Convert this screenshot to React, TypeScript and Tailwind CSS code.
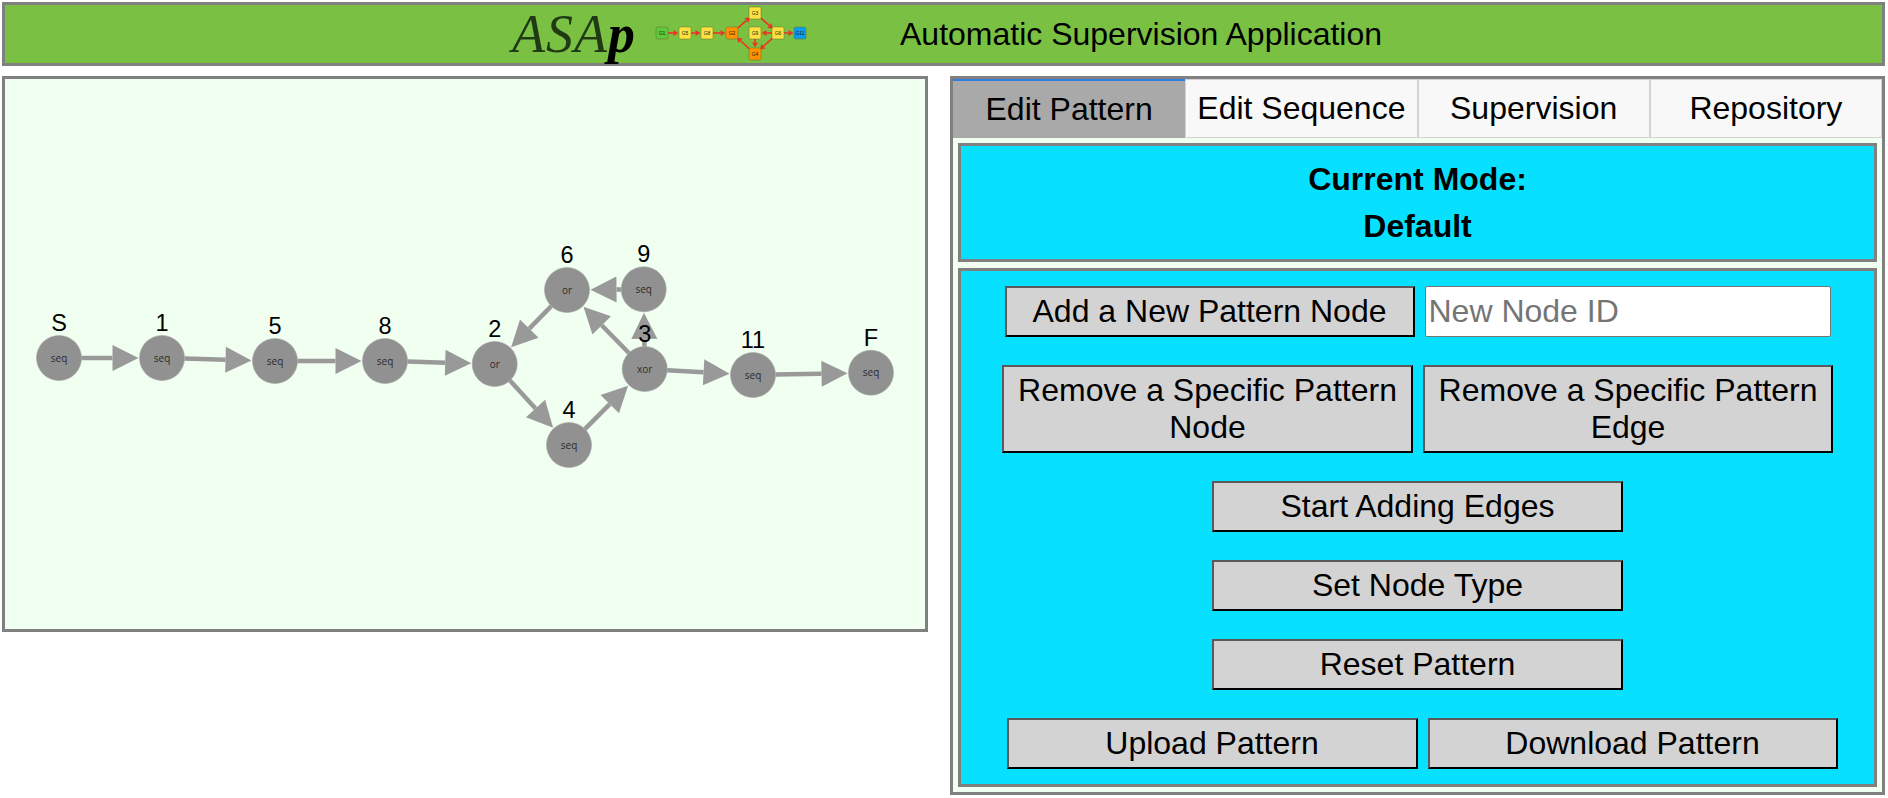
const sans = "font-['Liberation_Sans',Arial,sans-serif]"

type GraphNode = { id: string; kind: string; x: number; y: number }

const nodes: GraphNode[] = [
  { id: 'S', kind: 'seq', x: 59, y: 358 },
  { id: '1', kind: 'seq', x: 162, y: 358 },
  { id: '5', kind: 'seq', x: 275, y: 361 },
  { id: '8', kind: 'seq', x: 385, y: 361 },
  { id: '2', kind: 'or', x: 494.7, y: 364 },
  { id: '6', kind: 'or', x: 567, y: 290 },
  { id: '9', kind: 'seq', x: 643.7, y: 289.3 },
  { id: '3', kind: 'xor', x: 644.7, y: 369 },
  { id: '4', kind: 'seq', x: 569, y: 445 },
  { id: '11', kind: 'seq', x: 753, y: 375 },
  { id: 'F', kind: 'seq', x: 871, y: 372.7 },
]

const edges = [
  ['S', '1'], ['1', '5'], ['5', '8'], ['8', '2'], ['2', '4'], ['4', '3'],
  ['3', '6'], ['3', '9'], ['9', '6'], ['6', '2'], ['3', '11'], ['11', 'F'],
]

function Edge({ from, to }: { from: GraphNode; to: GraphNode }) {
  const dx = to.x - from.x
  const dy = to.y - from.y
  const len = Math.hypot(dx, dy)
  const ux = dx / len
  const uy = dy / len
  const r = 22.5
  const tipX = to.x - ux * (r + 1)
  const tipY = to.y - uy * (r + 1)
  const baseX = tipX - ux * 26
  const baseY = tipY - uy * 26
  const px = -uy * 13
  const py = ux * 13
  return (
    <g>
      <line x1={from.x + ux * r} y1={from.y + uy * r} x2={baseX} y2={baseY} stroke="#999999" strokeWidth={4.5} />
      <polygon points={`${tipX},${tipY} ${baseX + px},${baseY + py} ${baseX - px},${baseY - py}`} fill="#999999" />
    </g>
  )
}

function PatternGraph() {
  const byId = (id: string) => nodes.find((n) => n.id === id)!
  return (
    <svg viewBox="5 79 920 550" className="block h-full w-full">
      {edges.map(([a, b]) => (
        <Edge key={a + b} from={byId(a)} to={byId(b)} />
      ))}
      {nodes.map((n) => (
        <g key={n.id}>
          <circle cx={n.x} cy={n.y} r={22.5} fill="#919191" stroke="#a3a3a3" strokeWidth={0.6} />
          <text x={n.x} y={n.y + 3.5} textAnchor="middle" fontSize={10} fill="#2b2b2b" fontFamily="'Open Sans', sans-serif">
            {n.kind}
          </text>
          <text x={n.x} y={n.y - 27} textAnchor="middle" fontSize={23.5} fill="#000000" fontFamily="'Liberation Sans', sans-serif">
            {n.id}
          </text>
        </g>
      ))}
    </svg>
  )
}

type LogoNode = { id: string; x: number; y: number; fill: string }

const logoNodes: LogoNode[] = [
  { id: 'G1', x: 662, y: 33, fill: '#5ec93a' },
  { id: 'G5', x: 685, y: 33, fill: '#ffe23f' },
  { id: 'G8', x: 707, y: 33, fill: '#ffe23f' },
  { id: 'G2', x: 732, y: 33, fill: '#ff9200' },
  { id: 'G3', x: 755, y: 13, fill: '#ffe23f' },
  { id: 'G9', x: 755, y: 33, fill: '#ffe23f' },
  { id: 'G6', x: 778, y: 33, fill: '#ffe23f' },
  { id: 'G4', x: 755, y: 54, fill: '#ff9200' },
  { id: 'G11', x: 800, y: 33, fill: '#0a9df2' },
]

const logoEdges = [
  ['G1', 'G5'], ['G5', 'G8'], ['G8', 'G2'], ['G2', 'G3'], ['G3', 'G6'], ['G6', 'G9'],
  ['G6', 'G11'], ['G9', 'G4'], ['G6', 'G4'], ['G4', 'G2'],
]

function LogoGraph() {
  const byId = (id: string) => logoNodes.find((n) => n.id === id)!
  return (
    <svg viewBox="654 5 154 58" className="h-[58px] w-[154px] shrink-0">
      {logoEdges.map(([a, b]) => {
        const s = byId(a)
        const t = byId(b)
        const len = Math.hypot(t.x - s.x, t.y - s.y)
        const ux = (t.x - s.x) / len
        const uy = (t.y - s.y) / len
        const tipX = t.x - ux * 6.5
        const tipY = t.y - uy * 6.5
        const bx = tipX - ux * 5
        const by = tipY - uy * 5
        const px = -uy * 3
        const py = ux * 3
        return (
          <g key={a + b}>
            <line x1={s.x + ux * 6} y1={s.y + uy * 6} x2={bx} y2={by} stroke="#ee3322" strokeWidth={1.6} />
            <polygon points={`${tipX},${tipY} ${bx + px},${by + py} ${bx - px},${by - py}`} fill="#ee3322" />
          </g>
        )
      })}
      {logoNodes.map((n) => (
        <g key={n.id}>
          <rect x={n.x - 6} y={n.y - 6} width={12} height={12} rx={1.5} fill={n.fill} stroke="#6b6b2e" strokeWidth={0.5} />
          <text x={n.x} y={n.y + 1.8} textAnchor="middle" fontSize={5} fill="#1a1a1a" fontFamily="'Liberation Sans', sans-serif">
            {n.id}
          </text>
        </g>
      ))}
    </svg>
  )
}

const btn =
  "h-full w-full border-2 border-t-[#5a5a5a] border-l-[#5a5a5a] border-r-black border-b-black bg-[#d3d3d3] text-[32px] leading-[37px] text-black"

export default function App() {
  return (
    <div className={`${sans} h-[798px] w-[1888px] overflow-hidden bg-white text-black`}>
      <header className="ml-[2px] mt-[2px] flex h-[64px] w-[1883px] items-center border-[3px] border-[#808080] bg-[#7ac143]">
        <span className="ml-[507px] w-[142px] shrink-0 whitespace-nowrap font-['Liberation_Serif',serif] text-[54px] italic leading-none tracking-[1px]">
          <span className="text-[#1f3a14]">ASA</span>
          <span className="font-bold">p</span>
        </span>
        <LogoGraph />
        <span className="ml-[92px] whitespace-nowrap text-[32px]">Automatic Supervision Application</span>
      </header>

      <div className="mt-[10px] flex items-start">
        <div className="ml-[2px] h-[556px] w-[926px] border-[3px] border-[#808080] bg-[#f0fff0]">
          <PatternGraph />
        </div>

        <div className="ml-[22px] flex h-[719px] w-[935px] flex-col border-[3px] border-[#808080] bg-[#f0fff0]">
          <nav className="grid h-[59px] grid-cols-4 text-[32px]">
            <div className="flex items-center justify-center border-t-2 border-[#2f7de1] bg-[#a9a9a9] pb-[2px]">Edit Pattern</div>
            <div className="flex items-center justify-center border border-[#d3d3d3] bg-[#f8f8f8] pb-[2px]">Edit Sequence</div>
            <div className="flex items-center justify-center border border-[#d3d3d3] bg-[#f8f8f8] pb-[2px]">Supervision</div>
            <div className="flex items-center justify-center border border-[#d3d3d3] bg-[#f8f8f8] pb-[2px]">Repository</div>
          </nav>

          <div className="mx-[5px] mt-[5px] flex h-[119px] flex-col items-center justify-center gap-[10px] border-[3px] border-[#808080] bg-[#08e0ff] text-[32px] font-bold leading-[37px]">
            <p>Current Mode:</p>
            <p>Default</p>
          </div>

          <div className="mx-[5px] mt-[6px] flex h-[519px] flex-col items-center gap-[28px] border-[3px] border-[#808080] bg-[#08e0ff] pt-[15px]">
            <div className="flex h-[51px] gap-[10px]">
              <div className="w-[410px]"><button className={btn}>Add a New Pattern Node</button></div>
              <input
                placeholder="New Node ID"
                className="h-full w-[406px] rounded-[2px] border border-[#767676] bg-white px-[3px] text-[32px] placeholder:text-[#757575]"
              />
            </div>
            <div className="flex h-[88px] gap-[10px]">
              <div className="w-[411px]"><button className={btn}>Remove a Specific Pattern Node</button></div>
              <div className="w-[410px]"><button className={btn}>Remove a Specific Pattern Edge</button></div>
            </div>
            <div className="h-[51px] w-[411px]"><button className={btn}>Start Adding Edges</button></div>
            <div className="h-[51px] w-[411px]"><button className={btn}>Set Node Type</button></div>
            <div className="h-[51px] w-[411px]"><button className={btn}>Reset Pattern</button></div>
            <div className="ml-[9px] flex h-[51px] gap-[10px]">
              <div className="w-[411px]"><button className={btn}>Upload Pattern</button></div>
              <div className="w-[410px]"><button className={btn}>Download Pattern</button></div>
            </div>
          </div>
        </div>
      </div>
    </div>
  )
}
